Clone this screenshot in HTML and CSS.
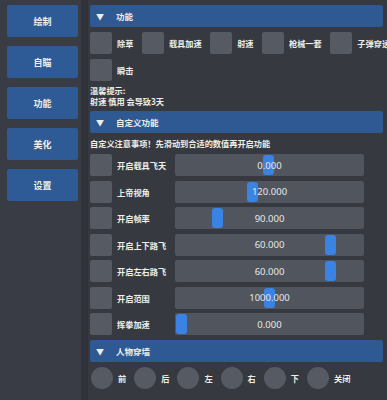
FILE: index.html
```html
<!DOCTYPE html>
<html lang="zh">
<head>
<meta charset="utf-8">
<link rel="stylesheet" href="styles.css">
</head>
<body>
<div class="app">
  <nav class="side">
    <div class="tab">绘制</div>
    <div class="tab">自瞄</div>
    <div class="tab">功能</div>
    <div class="tab">美化</div>
    <div class="tab">设置</div>
  </nav>
  <div class="sep"></div>
  <main class="main">
    <div class="head"><span class="arrow">▼</span><span>功能</span></div>
    <div class="checks">
      <div class="item"><span class="box"></span><span class="lbl">除草</span></div>
      <div class="item"><span class="box"></span><span class="lbl">载具加速</span></div>
      <div class="item"><span class="box"></span><span class="lbl">射速</span></div>
      <div class="item"><span class="box"></span><span class="lbl">枪械一套</span></div>
      <div class="item"><span class="box"></span><span class="lbl">子弹穿透</span></div>
    </div>
    <div class="checks">
      <div class="item"><span class="box"></span><span class="lbl">瞬击</span></div>
    </div>
    <div class="tip"><div>温馨提示:</div><div>射速 慎用 会导致3天</div></div>
    <div class="head"><span class="arrow">▼</span><span>自定义功能</span></div>
    <div class="note">自定义注意事项！先滑动到合适的数值再开启功能</div>
    <div class="sliders">
      <div class="srow"><span class="box"></span><span class="slbl">开启载具飞天</span><div class="slider"><span class="grab" style="left:88px"></span><span class="val">0.000</span></div></div>
      <div class="srow"><span class="box"></span><span class="slbl">上帝视角</span><div class="slider"><span class="grab" style="left:72px"></span><span class="val">120.000</span></div></div>
      <div class="srow"><span class="box"></span><span class="slbl">开启帧率</span><div class="slider"><span class="grab" style="left:37px"></span><span class="val">90.000</span></div></div>
      <div class="srow"><span class="box"></span><span class="slbl">开启上下路飞</span><div class="slider"><span class="grab" style="left:150px"></span><span class="val">60.000</span></div></div>
      <div class="srow"><span class="box"></span><span class="slbl">开启左右路飞</span><div class="slider"><span class="grab" style="left:150px"></span><span class="val">60.000</span></div></div>
      <div class="srow"><span class="box"></span><span class="slbl">开启范围</span><div class="slider"><span class="grab" style="left:89px"></span><span class="val">1000.000</span></div></div>
      <div class="srow"><span class="box"></span><span class="slbl">挥拳加速</span><div class="slider"><span class="grab" style="left:1px"></span><span class="val">0.000</span></div></div>
    </div>
    <div class="head"><span class="arrow">▼</span><span>人物穿墙</span></div>
    <div class="radios">
      <div class="item"><span class="circle"></span><span class="lbl">前</span></div>
      <div class="item"><span class="circle"></span><span class="lbl">后</span></div>
      <div class="item"><span class="circle"></span><span class="lbl">左</span></div>
      <div class="item"><span class="circle"></span><span class="lbl">右</span></div>
      <div class="item"><span class="circle"></span><span class="lbl">下</span></div>
      <div class="item"><span class="circle"></span><span class="lbl">关闭</span></div>
    </div>
  </main>
</div>
</body>
</html>
```
FILE: styles.css
```css
html, body {
  margin: 0;
  padding: 0;
  width: 387px;
  height: 400px;
  overflow: hidden;
  background: #383b43;
  font-family: "Noto Sans CJK SC", "Noto Sans", sans-serif;
  font-weight: 700;
  color: #efeee6;
}

.app {
  display: flex;
  height: 400px;
}

.side {
  width: 74px;
  padding: 5px 0 0 7px;
  display: flex;
  flex-direction: column;
  gap: 9px;
  background: #393c44;
}

.tab {
  width: 71px;
  height: 32px;
  background: #2e5b95;
  border-radius: 2px;
  display: flex;
  align-items: center;
  justify-content: center;
  font-size: 9px;
}

.sep {
  width: 7px;
  background: #30333a;
}

.main {
  flex: 1;
  padding: 5px 0 0 2px;
  display: flex;
  flex-direction: column;
  gap: 5px;
  min-width: 0;
  overflow: hidden;
  background: #363940;
}

.head {
  width: 293px;
  height: 22px;
  background: #2f5993;
  border-radius: 2px;
  display: flex;
  align-items: center;
  font-size: 8.5px;
  flex-shrink: 0;
}

.arrow {
  width: 26px;
  padding-left: 6px;
  box-sizing: border-box;
  font-size: 8px;
}

.checks {
  display: flex;
  gap: 8.5px;
  white-space: nowrap;
  flex-shrink: 0;
}

.item {
  display: flex;
  align-items: center;
  flex-shrink: 0;
}

.box {
  width: 22px;
  height: 22px;
  background: #555a63;
  border-radius: 2px;
  flex-shrink: 0;
}

.lbl {
  margin-left: 5px;
  font-size: 8.2px;
}

.tip {
  display: flex;
  flex-direction: column;
  font-size: 8.2px;
  line-height: 11px;
  margin: -1px 0 -1px 0;
  flex-shrink: 0;
}

.note {
  font-size: 8.2px;
  line-height: 10px;
  white-space: nowrap;
  flex-shrink: 0;
}

.sliders {
  display: flex;
  flex-direction: column;
  gap: 4.5px;
  margin-top: 1px;
  flex-shrink: 0;
}

.srow {
  display: flex;
  align-items: center;
}

.slbl {
  width: 58px;
  margin-left: 5px;
  font-size: 8.2px;
  white-space: nowrap;
}

.slider {
  position: relative;
  width: 189px;
  height: 22px;
  background: #50555e;
  border-radius: 2px;
  display: flex;
  align-items: center;
  justify-content: center;
}

.grab {
  position: absolute;
  top: 1px;
  width: 11px;
  height: 20px;
  background: #3a83e4;
  border-radius: 3px;
}

.val {
  position: relative;
  font-family: "Noto Sans", sans-serif;
  font-weight: 400;
  font-size: 9.5px;
  color: #e9e9e6;
}

.radios {
  display: flex;
  gap: 8px;
  padding-left: 1px;
  flex-shrink: 0;
}

.circle {
  width: 22px;
  height: 22px;
  border-radius: 50%;
  background: #555a63;
  flex-shrink: 0;
}
```
